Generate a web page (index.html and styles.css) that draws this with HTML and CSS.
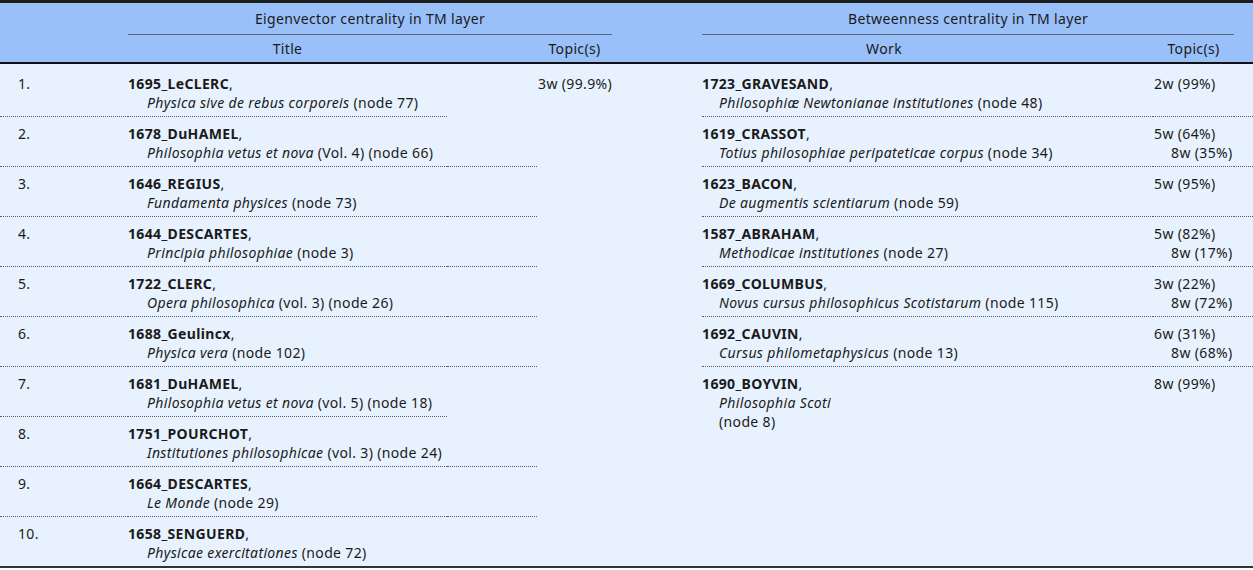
FILE: index.html
```html
<!DOCTYPE html>
<html lang="en">
<head>
<meta charset="utf-8">
<title>Centrality in TM layer</title>
<link rel="stylesheet" href="styles.css">
</head>
<body>
<table class="tbl">
  <colgroup>
    <col class="c-num"><col class="c-title"><col class="c-sp1"><col class="c-top1">
    <col class="c-gap"><col class="c-work"><col class="c-sp2"><col class="c-top2"><col class="c-end">
  </colgroup>
  <thead>
    <tr class="hr1">
      <th></th>
      <th colspan="3" class="grp">Eigenvector centrality in TM layer</th>
      <th></th>
      <th colspan="3" class="grp">Betweenness centrality in TM layer</th>
      <th></th>
    </tr>
    <tr class="hr2">
      <th></th>
      <th>Title</th>
      <th></th>
      <th>Topic(s)</th>
      <th></th>
      <th>Work</th>
      <th></th>
      <th>Topic(s)</th>
      <th></th>
    </tr>
  </thead>
  <tbody>
    <tr>
      <td class="num sep">1.</td>
      <td class="sep"><b>1695_LeCLERC</b>,<div class="sub"><i>Physica sive de rebus corporeis</i> (node 77)</div></td>
      <td></td>
      <td class="top1">3w (99.9%)</td>
      <td></td>
      <td class="sep"><b>1723_GRAVESAND</b>,<div class="sub r"><i>Philosophiæ Newtonianae institutiones</i> (node 48)</div></td>
      <td class="sep"></td>
      <td class="sep top2"><div>2w (99%)</div></td>
      <td class="sep"></td>
    </tr>
    <tr>
      <td class="num sep">2.</td>
      <td class="sep"><b>1678_DuHAMEL</b>,<div class="sub"><i>Philosophia vetus et nova</i> (Vol. 4) (node 66)</div></td>
      <td class="sep"></td>
      <td class="top1"></td>
      <td></td>
      <td class="sep"><b>1619_CRASSOT</b>,<div class="sub r"><i>Totius philosophiae peripateticae corpus</i> (node 34)</div></td>
      <td class="sep"></td>
      <td class="sep top2"><div>5w (64%)</div><div class="sub r">8w (35%)</div></td>
      <td class="sep"></td>
    </tr>
    <tr>
      <td class="num sep">3.</td>
      <td class="sep"><b>1646_REGIUS</b>,<div class="sub"><i>Fundamenta physices</i> (node 73)</div></td>
      <td class="sep"></td>
      <td class="top1"></td>
      <td></td>
      <td class="sep"><b>1623_BACON</b>,<div class="sub r"><i>De augmentis scientiarum</i> (node 59)</div></td>
      <td class="sep"></td>
      <td class="sep top2"><div>5w (95%)</div></td>
      <td class="sep"></td>
    </tr>
    <tr>
      <td class="num sep">4.</td>
      <td class="sep"><b>1644_DESCARTES</b>,<div class="sub"><i>Principia philosophiae</i> (node 3)</div></td>
      <td class="sep"></td>
      <td class="top1"></td>
      <td></td>
      <td class="sep"><b>1587_ABRAHAM</b>,<div class="sub r"><i>Methodicae institutiones</i> (node 27)</div></td>
      <td class="sep"></td>
      <td class="sep top2"><div>5w (82%)</div><div class="sub r">8w (17%)</div></td>
      <td class="sep"></td>
    </tr>
    <tr>
      <td class="num sep">5.</td>
      <td class="sep"><b>1722_CLERC</b>,<div class="sub"><i>Opera philosophica</i> (vol. 3) (node 26)</div></td>
      <td class="sep"></td>
      <td class="top1"></td>
      <td></td>
      <td class="sep"><b>1669_COLUMBUS</b>,<div class="sub r"><i>Novus cursus philosophicus Scotistarum</i> (node 115)</div></td>
      <td class="sep"></td>
      <td class="sep top2"><div>3w (22%)</div><div class="sub r">8w (72%)</div></td>
      <td class="sep"></td>
    </tr>
    <tr>
      <td class="num sep">6.</td>
      <td class="sep"><b>1688_Geulincx</b>,<div class="sub"><i>Physica vera</i> (node 102)</div></td>
      <td class="sep"></td>
      <td class="top1"></td>
      <td></td>
      <td class="sep"><b>1692_CAUVIN</b>,<div class="sub r"><i>Cursus philometaphysicus</i> (node 13)</div></td>
      <td class="sep"></td>
      <td class="sep top2"><div>6w (31%)</div><div class="sub r">8w (68%)</div></td>
      <td class="sep"></td>
    </tr>
    <tr>
      <td class="num sep">7.</td>
      <td class="sep"><b>1681_DuHAMEL</b>,<div class="sub"><i>Philosophia vetus et nova</i> (vol. 5) (node 18)</div></td>
      <td></td>
      <td class="top1"></td>
      <td></td>
      <td rowspan="4"><b>1690_BOYVIN</b>,<div class="sub r"><i>Philosophia Scoti</i></div><div class="sub r">(node 8)</div></td>
      <td rowspan="4"></td>
      <td rowspan="4" class="top2"><div>8w (99%)</div></td>
      <td rowspan="4"></td>
    </tr>
    <tr>
      <td class="num sep">8.</td>
      <td class="sep"><b>1751_POURCHOT</b>,<div class="sub"><i>Institutiones philosophicae</i> (vol. 3) (node 24)</div></td>
      <td class="sep"></td>
      <td class="top1"></td>
      <td></td>
    </tr>
    <tr>
      <td class="num sep">9.</td>
      <td class="sep"><b>1664_DESCARTES</b>,<div class="sub"><i>Le Monde</i> (node 29)</div></td>
      <td class="sep"></td>
      <td class="top1"></td>
      <td></td>
    </tr>
    <tr>
      <td class="num">10.</td>
      <td><b>1658_SENGUERD</b>,<div class="sub"><i>Physicae exercitationes</i> (node 72)</div></td>
      <td></td>
      <td class="top1"></td>
      <td></td>
    </tr>
  </tbody>
</table>
</body>
</html>
```

FILE: styles.css
```css
html, body {
  margin: 0;
  padding: 0;
  background: #ffffff;
}

body {
  font-family: "Noto Sans", "Open Sans", sans-serif;
  font-size: 14px;
  letter-spacing: 0.35px;
  color: #1a1a1a;
}

.tbl {
  width: 1253px;
  table-layout: fixed;
  border-collapse: separate;
  border-spacing: 0;
  border-top: 3px solid #1c1c1c;
  border-bottom: 2px solid #333333;
}

.c-num { width: 128px; }
.c-title { width: 319px; }
.c-sp1 { width: 90px; }
.c-top1 { width: 75px; }
.c-gap { width: 90px; }
.c-work { width: 364px; }
.c-sp2 { width: 87px; }
.c-top2 { width: 81px; }
.c-end { width: 19px; }

thead th {
  background: #99c0f9;
  font-weight: normal;
  line-height: 19px;
  padding: 0;
  text-align: center;
}

.hr1 th {
  padding: 6px 0 6px;
}

.hr1 th.grp {
  border-bottom: 1px solid #5d6877;
}

.hr1 th:not(.grp) {
  padding-bottom: 7px;
}

.hr2 th {
  padding: 4px 0 4px;
  border-bottom: 2px solid #111111;
}

tbody td {
  background: #e8f2fe;
  vertical-align: top;
  text-align: left;
  line-height: 19px;
  padding: 7px 0 4px;
}

tbody tr:first-child td {
  padding-top: 10px;
}

.sep {
  border-bottom: 1px dotted #555b66;
}

td.num {
  padding-left: 18px;
}

b {
  font-weight: 700;
}

.sub {
  padding-left: 19px;
}

.sub.r {
  padding-left: 17px;
}

td.top1 {
  text-align: right;
}

td.top2 {
  padding-left: 1px;
}
```
